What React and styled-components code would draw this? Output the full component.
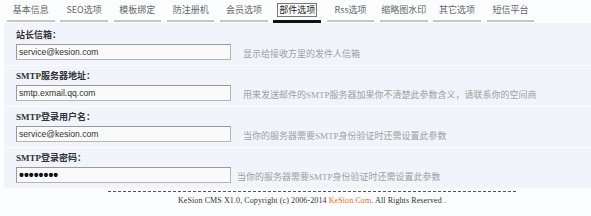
import React from 'react';
import styled, { createGlobalStyle } from 'styled-components';

const GlobalStyle = createGlobalStyle`
    html, body {
        margin: 0;
        padding: 0;
        background: #fcfdfe;
    }
    body {
        width: 591px;
        height: 216px;
        overflow: hidden;
        font-family: "Noto Sans CJK SC", sans-serif;
    }
`;

const tabs = ['基本信息', 'SEO选项', '模板绑定', '防注册机', '会员选项', '部件选项', 'Rss选项', '缩略图水印', '其它选项', '短信平台'];

const fields = [
    { label: '站长信箱：', value: 'service@kesion.com', hint: '显示给接收方里的发件人信箱' },
    { label: 'SMTP服务器地址：', value: 'smtp.exmail.qq.com', hint: '用来发送邮件的SMTP服务器加果你不清楚此参数含义，请联系你的空间商' },
    { label: 'SMTP登录用户名：', value: 'service@kesion.com', hint: '当你的服务器需要SMTP身份验证时还需设置此参数' },
    { label: 'SMTP登录密码：', value: '12345678', hint: '当你的服务器需要SMTP身份验证时还需设置此参数', password: true, tight: true },
];

function App() {
    return (
        <Page>
            <GlobalStyle />
            <TabBar>
                {tabs.map((t, i) => (
                    <Tab key={t} $active={i === 5}>
                        <span>{t}</span>
                    </Tab>
                ))}
            </TabBar>
            <Panel>
                {fields.map(f => (
                    <Row key={f.label}>
                        <Label>{f.label}</Label>
                        <Line>
                            <Input
                                type={f.password ? 'password' : 'text'}
                                defaultValue={f.value}
                                readOnly
                                $password={f.password}
                            />
                            <Hint $tight={f.tight}>{f.hint}</Hint>
                        </Line>
                    </Row>
                ))}
            </Panel>
            <Footer>
                KeSion CMS X1.0, Copyright (c) 2006-2014 <em>KeSion.Com</em>. All Rights Reserved .
            </Footer>
        </Page>
    );
}

const Page = styled.div`
    width: 591px;
    height: 216px;
    display: flex;
    flex-direction: column;
`;

const TabBar = styled.div`
    display: flex;
    gap: 5.8px;
    height: 23px;
    padding-left: 7px;
    background: #fcfdfe;
`;

const Tab = styled.div`
    width: 47.5px;
    height: 20px;
    display: flex;
    align-items: center;
    justify-content: center;
    border-bottom: ${p => (p.$active ? '3px solid #111' : '2px solid #c6c6c6')};
    margin-bottom: ${p => (p.$active ? '0' : '1px')};
    font-size: 9px;
    color: ${p => (p.$active ? '#222' : '#666')};
    white-space: nowrap;

    span {
        padding: 0 1px;
        line-height: 12px;
        border: 1px solid ${p => (p.$active ? '#777' : 'transparent')};
    }
`;

const Panel = styled.div`
    margin-left: 4px;
    padding-top: 2px;
    background: #f1f5fb;
    display: flex;
    flex-direction: column;
`;

const Row = styled.div`
    padding: 4px 0 5px 12px;
    display: flex;
    flex-direction: column;
    gap: 2px;
    border-bottom: 1px solid #fafcfe;

    &:last-child {
        border-bottom: none;
    }
`;

const Label = styled.div`
    height: 13px;
    line-height: 13px;
    font-family: "Liberation Serif", "Noto Sans CJK SC", serif;
    font-weight: 700;
    font-size: 9px;
    color: #333;
`;

const Line = styled.div`
    display: flex;
    align-items: center;
`;

const Input = styled.input`
    box-sizing: border-box;
    width: 215px;
    height: 16px;
    margin: 0;
    padding: 0 2px;
    border: 1px solid #b5b5b5;
    border-top-color: #9a9a9a;
    border-left-color: #9a9a9a;
    background: #fafafa;
    font-family: "Liberation Sans", Arial, sans-serif;
    font-size: ${p => (p.$password ? '14px' : '8.6px')};
    font-weight: ${p => (p.$password ? '700' : '400')};
    color: ${p => (p.$password ? '#111' : '#333')};
    outline: none;
`;

const Hint = styled.span`
    margin-left: ${p => (p.$tight ? '6px' : '12px')};
    margin-top: 2px;
    font-family: "Liberation Serif", "Noto Sans CJK SC", serif;
    font-size: 9px;
    color: #a0a0a0;
    white-space: nowrap;
`;

const Footer = styled.div`
    width: 408px;
    margin: 3px 0 0 108px;
    border-top: 1px dashed #555;
    padding-top: 4px;
    text-align: center;
    font-family: "Liberation Serif", serif;
    font-size: 8px;
    letter-spacing: 0.1px;
    color: #333;
    white-space: nowrap;

    em {
        font-style: normal;
        color: #f60;
    }
`;

export default App;
